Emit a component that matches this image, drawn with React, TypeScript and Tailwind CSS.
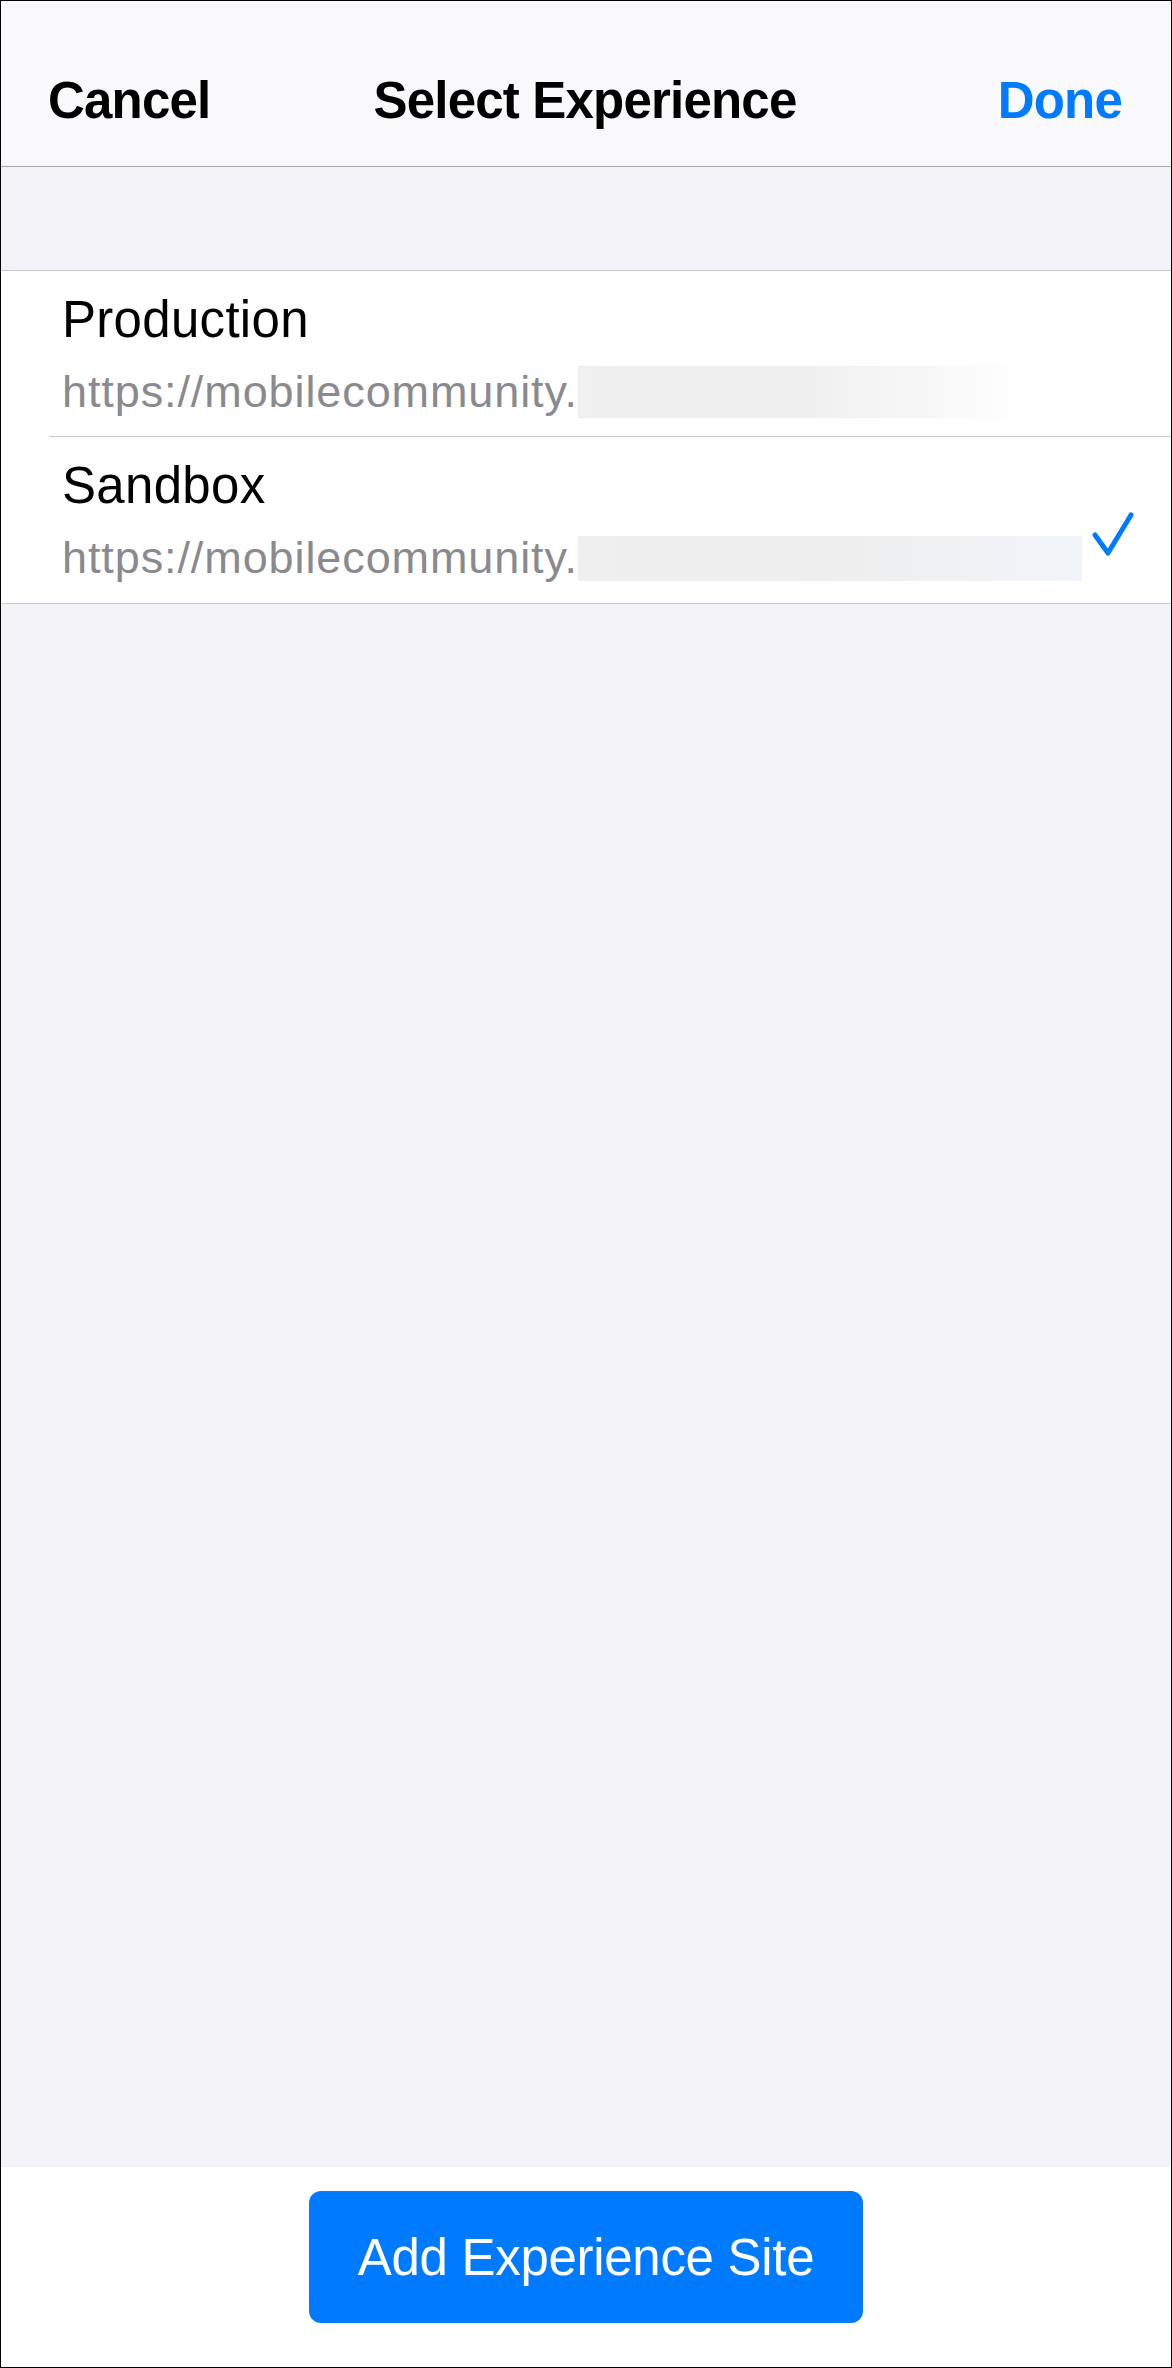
import React from 'react';

const BLUE = '#007aff';

interface SiteRow {
  name: string;
  host: string;
  selected: boolean;
  maskWidth: string;
  maskHeight: string;
  maskClass: string;
}

const sites: SiteRow[] = [
  {
    name: 'Production',
    host: 'https://mobilecommunity.',
    selected: false,
    maskWidth: 'w-[453px]',
    maskHeight: 'h-[52px]',
    maskClass: 'bg-gradient-to-r from-[#f0f0f0] via-[#efefef] to-[#ffffff]',
  },
  {
    name: 'Sandbox',
    host: 'https://mobilecommunity.',
    selected: true,
    maskWidth: 'w-[504px]',
    maskHeight: 'h-[45px]',
    maskClass: 'bg-gradient-to-r from-[#efefef] via-[#eeeeee] to-[#f1f4f8]',
  },
];

function Checkmark() {
  return (
    <svg width="46" height="46" viewBox="0 0 46 46" fill="none" className="mt-[74px] shrink-0">
      <path d="M5 24 L18 42 L41 4" stroke={BLUE} strokeWidth="5" strokeLinecap="round" strokeLinejoin="round" />
    </svg>
  );
}

function SiteItem({ site, last }: { site: SiteRow; last: boolean }) {
  return (
    <div className="h-[166px] pl-[49px]">
      <div className={`h-full flex items-start justify-between pr-[35px] ${last ? '' : 'border-b border-[#c8c7cc]'}`}>
        <div className="pl-[12px] pt-[19px]">
          <div className="text-[51px] leading-[60px] text-black tracking-[0.3px]">{site.name}</div>
          <div className="mt-[16px] h-[52px] flex items-center text-[45px] leading-[52px] text-[#8a8a8e]">
            <span className="tracking-[0.9px]">{site.host}</span>
            <span className={`inline-block ${site.maskWidth} ${site.maskHeight} ${site.maskClass} blur-[0.5px]`} />
          </div>
        </div>
        {site.selected && <Checkmark />}
      </div>
    </div>
  );
}

export default function App() {
  return (
    <div
      className="w-[1172px] h-[2368px] border border-black bg-[#f2f2f7] flex flex-col overflow-hidden"
      style={{ fontFamily: '"Liberation Sans", Arial, sans-serif' }}
    >
      <header className="h-[166px] shrink-0 bg-[#f9f9fb] border-b border-[#a8a8ab] grid grid-cols-[1fr_auto_1fr] items-start pt-[70px] pl-[47px] pr-[49px]">
        <span className="text-[51px] leading-[60px] font-bold text-black tracking-[-0.8px]">Cancel</span>
        <span className="text-[51px] leading-[60px] font-bold text-black tracking-[-0.8px]">Select Experience</span>
        <span className="text-[51px] leading-[60px] font-bold text-right tracking-[-0.8px]" style={{ color: BLUE }}>
          Done
        </span>
      </header>

      <div className="h-[103px] shrink-0" />

      <section className="bg-white border-t border-b border-[#c8c7cc] shrink-0">
        {sites.map((site, i) => (
          <SiteItem key={site.name} site={site} last={i === sites.length - 1} />
        ))}
      </section>

      <div className="flex-1" />

      <footer className="h-[200px] shrink-0 bg-white flex justify-center pt-[24px]">
        <button
          type="button"
          className="w-[554px] h-[132px] rounded-[12px] text-white text-[51px] leading-none tracking-[-0.3px] flex items-center justify-center"
          style={{ backgroundColor: BLUE }}
        >
          Add Experience Site
        </button>
      </footer>
    </div>
  );
}
